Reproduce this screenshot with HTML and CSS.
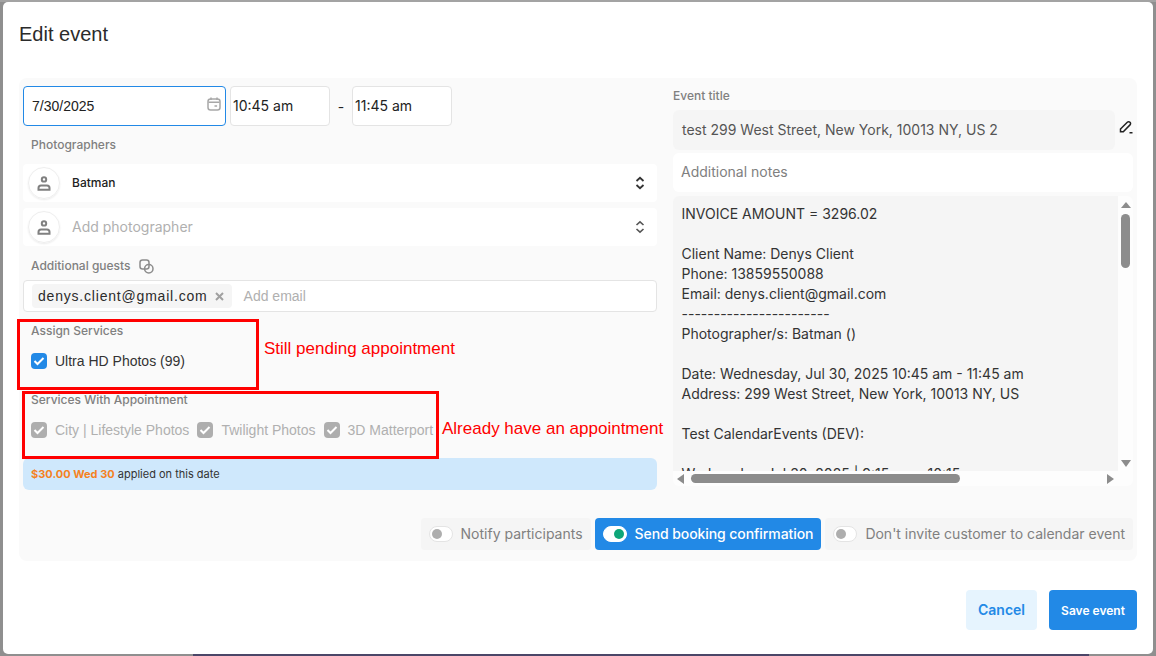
FILE: index.html
```html
<!DOCTYPE html>
<html lang="en">
<head>
    <meta charset="UTF-8">
    <title>Edit event</title>
    <link rel="stylesheet" href="styles.css">
</head>
<body>
    <div class="page-bar"></div>

    <div class="modal">
        <h1>Edit event</h1>

        <div class="panel">
            <div class="columns">
                <div class="left">
                    <div class="date-row">
                        <div class="field date-field">
                            <span>7/30/2025</span>
                            <svg class="cal-icon" width="14" height="14" viewBox="0 0 14 14" fill="none" stroke="#a8a8a8" stroke-width="1.5"><rect x="1" y="2" width="12" height="11" rx="2.5"/><path d="M4 .6v2.4M10 .6v2.4M1.500 5.200h11M7.500 9h2.600"/></svg>
                        </div>
                        <div class="field time-field">10:45 am</div>
                        <span class="dash">-</span>
                        <div class="field time-field">11:45 am</div>
                    </div>

                    <div class="label label-photographers">Photographers</div>
                    <div class="select-row">
                        <span class="avatar">
                            <svg width="14" height="15" viewBox="0 0 14 15" fill="none" stroke="#808080" stroke-width="2"><circle cx="7" cy="3.400" r="2.200"/><path d="M1.500 13.800v-1.800c0-1.500 1-2.500 2.500-2.500h6c1.500 0 2.500 1 2.500 2.500v1.800z"/></svg>
                        </span>
                        <span class="select-name">Batman</span>
                        <svg class="chevrons" width="10" height="14" viewBox="0 0 10 14" fill="none" stroke="#333" stroke-width="1.800"><path d="M1.500 5 5 1.800 8.500 5M1.500 9 5 12.200 8.500 9"/></svg>
                    </div>
                    <div class="select-row">
                        <span class="avatar">
                            <svg width="14" height="15" viewBox="0 0 14 15" fill="none" stroke="#808080" stroke-width="2"><circle cx="7" cy="3.400" r="2.200"/><path d="M1.500 13.800v-1.800c0-1.500 1-2.500 2.500-2.500h6c1.500 0 2.500 1 2.500 2.500v1.800z"/></svg>
                        </span>
                        <span class="select-placeholder">Add photographer</span>
                        <svg class="chevrons" width="10" height="14" viewBox="0 0 10 14" fill="none" stroke="#555" stroke-width="1.600"><path d="M1.500 5 5 1.800 8.500 5M1.500 9 5 12.200 8.500 9"/></svg>
                    </div>

                    <div class="label label-guests">
                        Additional guests
                        <svg width="15" height="15" viewBox="0 0 15 15" fill="none" stroke="#8c8c8c" stroke-width="1.500"><rect x="1" y="1" width="9" height="9" rx="2.500"/><circle cx="9.800" cy="9.800" r="4.200"/></svg>
                    </div>
                    <div class="email-box">
                        <span class="chip">
                            denys.client@gmail.com
                            <svg class="chip-x" width="9" height="9" viewBox="0 0 9 9" fill="none" stroke="#a0a0a0" stroke-width="2"><path d="M1 1l7 7M8 1l-7 7"/></svg>
                        </span>
                        <span class="email-placeholder">Add email</span>
                    </div>

                    <div class="label label-assign">Assign Services</div>
                    <div class="check-row check-row-assign">
                        <label class="check">
                            <span class="box box-on"><svg width="12" height="10" viewBox="0 0 12 10" fill="none" stroke="#fff" stroke-width="2"><path d="M1.500 5 4.500 8 10.500 2"/></svg></span>
                            Ultra HD Photos (99)
                        </label>
                    </div>

                    <div class="label label-with">Services With Appointment</div>
                    <div class="check-row check-row-with">
                        <label class="check check-off">
                            <span class="box"><svg width="12" height="10" viewBox="0 0 12 10" fill="none" stroke="#fff" stroke-width="2"><path d="M1.500 5 4.500 8 10.500 2"/></svg></span>
                            City | Lifestyle Photos
                        </label>
                        <label class="check check-off">
                            <span class="box"><svg width="12" height="10" viewBox="0 0 12 10" fill="none" stroke="#fff" stroke-width="2"><path d="M1.500 5 4.500 8 10.500 2"/></svg></span>
                            Twilight Photos
                        </label>
                        <label class="check check-off">
                            <span class="box"><svg width="12" height="10" viewBox="0 0 12 10" fill="none" stroke="#fff" stroke-width="2"><path d="M1.500 5 4.500 8 10.500 2"/></svg></span>
                            3D Matterport
                        </label>
                    </div>

                    <div class="promo"><b>$30.00 Wed 30</b> applied on this date</div>
                </div>

                <div class="right">
                    <div class="label label-title">Event title</div>
                    <div class="title-row">
                        <div class="title-input">test 299 West Street, New York, 10013 NY, US 2</div>
                        <svg class="pencil" width="14" height="14" viewBox="0 0 14 14" fill="none" stroke="#222" stroke-width="1.500"><path d="M1.500 9 8.300 2.200a1.900 1.900 0 0 1 2.700 2.700L4.300 11.800H1.500zM10.500 12.800h3"/></svg>
                    </div>
                    <div class="notes-input">Additional notes</div>
                    <div class="notes-box">
                        <div class="notes-main">
                            <div class="notes-text">INVOICE AMOUNT = 3296.02

Client Name: Denys Client
Phone: 13859550088
Email: denys.client@gmail.com
-----------------------
Photographer/s: Batman ()

Date: Wednesday, Jul 30, 2025 10:45 am - 11:45 am
Address: 299 West Street, New York, 10013 NY, US

Test CalendarEvents (DEV):

Wednesday, Jul 30, 2025 | 9:15 am - 10:15 am</div>
                            <div class="scroll-v">
                                <span class="arrow arrow-up"></span>
                                <span class="thumb-v"></span>
                                <span class="arrow arrow-down"></span>
                            </div>
                        </div>
                        <div class="scroll-h">
                            <span class="arrow arrow-left"></span>
                            <span class="thumb-h"></span>
                            <span class="arrow arrow-right"></span>
                        </div>
                    </div>
                </div>
            </div>

            <div class="toggles">
                <div class="toggle-item">
                    <span class="switch"><span class="knob"></span></span>
                    <span class="toggle-text">Notify participants</span>
                </div>
                <div class="toggle-item toggle-on">
                    <span class="switch"><span class="knob"></span></span>
                    <span class="toggle-text">Send booking confirmation</span>
                </div>
                <div class="toggle-item">
                    <span class="switch"><span class="knob"></span></span>
                    <span class="toggle-text">Don't invite customer to calendar event</span>
                </div>
            </div>
        </div>

        <div class="actions">
            <button class="btn btn-cancel">Cancel</button>
            <button class="btn btn-save">Save event</button>
        </div>

        <!-- annotations drawn on top of the screenshot -->
        <div class="note-box note-box-1"></div>
        <div class="note-text note-text-1">Still pending appointment</div>
        <div class="note-box note-box-2"></div>
        <div class="note-text note-text-2">Already have an appointment</div>
    </div>
</body>
</html>
```

FILE: styles.css
```css
/* Page behind the dialog */
html, body {
    margin: 0;
    height: 100%;
    overflow: hidden;
}

body {
    position: relative;
    background: linear-gradient(#a3a3a3 2px, #8f8f8f 2px);
    font-family: 'Inter', sans-serif;
    color: #222;
    padding: 2px 3px;
    box-sizing: border-box;
}

.page-bar {
    position: absolute;
    left: 193px;
    bottom: 0;
    width: 896px;
    height: 2px;
    background-color: #4b4668;
}

/* Dialog */
.modal {
    position: relative;
    background-color: #fff;
    width: 1150px;
    height: 652px;
    border-radius: 5px;
    padding: 0 16px;
    box-sizing: border-box;
}

h1 {
    margin: 0;
    padding-top: 19px;
    height: 76px;
    box-sizing: border-box;
    font-family: 'Liberation Sans', sans-serif;
    font-size: 20px;
    line-height: 26px;
    font-weight: 400;
    color: #2b2b2b;
}

/* Grey panel */
.panel {
    background-color: #fafafa;
    border-radius: 8px;
    height: 483px;
    padding: 8px 4px 11px;
    box-sizing: border-box;
    display: flex;
    flex-direction: column;
    justify-content: space-between;
}

.columns {
    display: flex;
    gap: 16px;
}

.left {
    width: 634px;
}

.right {
    width: 460px;
}

.label {
    font-size: 12px;
    line-height: 16px;
    font-weight: 500;
    color: #808080;
    padding-left: 8px;
}

/* Date and time */
.date-row {
    display: flex;
    align-items: center;
}

.field {
    height: 40px;
    background-color: #fff;
    border: 1px solid #e4e4e4;
    border-radius: 4px;
    box-sizing: border-box;
    font-size: 14px;
    display: flex;
    align-items: center;
}

.date-field {
    width: 203px;
    margin-right: 4px;
    border-color: #2289e6;
    padding: 0 4px 0 8px;
    justify-content: space-between;
    font-family: 'Liberation Sans', sans-serif;
}

.cal-icon {
    margin-bottom: 4px;
}

.time-field {
    width: 100px;
    padding: 0 0 2px 2px;
}

.dash {
    width: 22px;
    text-align: center;
    font-size: 14px;
}

.label-photographers {
    margin: 11px 0 11px;
}

/* Photographer selects */
.select-row {
    height: 38px;
    background-color: #fff;
    border-radius: 4px;
    margin-bottom: 6px;
    padding: 0 12px 0 5px;
    display: flex;
    align-items: center;
}

.avatar {
    width: 32px;
    height: 32px;
    border-radius: 50%;
    border: 1px solid #eee;
    box-shadow: 0 1px 2px rgba(0, 0, 0, 0.08);
    box-sizing: border-box;
    display: flex;
    align-items: center;
    justify-content: center;
    margin-right: 12px;
}

.select-name {
    font-size: 12px;
    font-weight: 500;
    flex: 1;
    padding-bottom: 2px;
}

.select-placeholder {
    font-size: 14px;
    color: #b0b0b0;
    flex: 1;
    padding-bottom: 2px;
}

.label-guests {
    margin-top: 12px;
    display: flex;
    align-items: center;
    gap: 8px;
}

/* Guests */
.email-box {
    margin-top: 6px;
    height: 32px;
    background-color: #fff;
    border: 1px solid #e4e4e4;
    border-radius: 4px;
    box-sizing: border-box;
    padding: 0 8px;
    display: flex;
    align-items: center;
    font-family: 'Liberation Sans', sans-serif;
    font-size: 14px;
}

.chip {
    background-color: #f5f5f5;
    border-radius: 4px;
    height: 24px;
    padding: 0 8px 0 6px;
    letter-spacing: 0.8px;
    margin-right: 12px;
    color: #2b2b2b;
    display: flex;
    align-items: center;
    gap: 7px;
    white-space: nowrap;
}

.email-placeholder {
    color: #b0b0b0;
}

.label-assign {
    margin-top: 11px;
}

/* Checkboxes */
.check-row {
    display: flex;
    padding-left: 8px;
    gap: 8px;
}

.check-row-assign {
    margin-top: 13px;
}

.label-with {
    margin-top: 22px;
}

.check-row-with {
    margin-top: 13px;
}

.check {
    display: flex;
    align-items: center;
    gap: 8px;
    font-family: 'Liberation Sans', sans-serif;
    font-size: 14px;
    line-height: 18px;
    color: #333;
}

.check-off {
    color: #b0b0b0;
}

.box {
    width: 16px;
    height: 16px;
    border-radius: 4px;
    background-color: #aeaeae;
    display: flex;
    align-items: center;
    justify-content: center;
}

.box-on {
    background-color: #2289e6;
}

/* Discount strip */
.promo {
    margin-top: 19px;
    height: 32px;
    background-color: #cfe8fc;
    border-radius: 6px;
    padding-left: 8px;
    font-size: 11px;
    line-height: 32px;
    color: #333;
}

.promo b {
    color: #f5821f;
    font-weight: 700;
}

/* Right column */
.label-title {
    margin-top: 2px;
    padding-left: 0;
}

.title-row {
    margin-top: 6px;
    display: flex;
    align-items: center;
}

.title-input {
    width: 442px;
    height: 40px;
    background-color: #f5f5f5;
    border-radius: 6px;
    padding-left: 9px;
    box-sizing: border-box;
    font-size: 14px;
    line-height: 40px;
    color: #555;
}

.pencil {
    margin-left: 4px;
    margin-top: -6px;
}

.notes-input {
    margin-top: 3px;
    height: 39px;
    background-color: #fff;
    border-radius: 6px;
    padding-left: 8px;
    font-size: 14px;
    line-height: 37px;
    color: #808080;
}

.notes-box {
    margin-top: 4px;
    background-color: #fdfdfd;
    border-radius: 6px;
    overflow: hidden;
}

.notes-main {
    display: flex;
    height: 275px;
}

.notes-text {
    width: 445px;
    background-color: #f5f5f5;
    padding: 8px 8.5px 0;
    box-sizing: border-box;
    font-size: 14px;
    line-height: 20px;
    color: #333;
    white-space: pre;
    overflow: hidden;
}

/* Scrollbars */
.scroll-v {
    width: 15px;
    display: flex;
    flex-direction: column;
    align-items: center;
    padding-top: 6px;
}

.thumb-v {
    width: 9px;
    height: 54px;
    margin-top: 6px;
    border-radius: 5px;
    background-color: #8c8c8c;
}

.arrow-down {
    margin-top: auto;
    margin-bottom: 4px;
}

.scroll-h {
    height: 15px;
    display: flex;
    align-items: center;
    padding-left: 4px;
    width: 445px;
    box-sizing: border-box;
}

.thumb-h {
    width: 269px;
    height: 9px;
    margin-left: 7px;
    border-radius: 5px;
    background-color: #8c8c8c;
}

.arrow {
    width: 0;
    height: 0;
    border-style: solid;
    border-color: transparent;
}

.arrow-up {
    border-width: 0 5px 6px;
    border-bottom-color: #8c8c8c;
}

.arrow-down {
    border-width: 7px 5px 0;
    border-top-color: #8c8c8c;
}

.arrow-left {
    border-width: 5px 7px 5px 0;
    border-right-color: #8c8c8c;
}

.arrow-right {
    border-width: 5px 0 5px 7px;
    border-left-color: #8c8c8c;
    margin-left: auto;
    margin-right: 4px;
}

/* Toggles */
.toggles {
    display: flex;
    justify-content: flex-end;
    gap: 4px;
}

.toggle-item {
    height: 32px;
    background-color: #f5f5f5;
    border-radius: 4px;
    padding: 0 8px;
    display: flex;
    align-items: center;
    gap: 8px;
    font-size: 14px;
    color: #808080;
}

.toggle-text {
    padding-bottom: 2px;
}

.toggle-on {
    background-color: #2289e6;
    color: #fff;
    font-weight: 500;
    letter-spacing: -0.08px;
}

.switch {
    width: 24px;
    height: 16px;
    background-color: #fff;
    border: 1px solid #e4e4e4;
    border-radius: 8px;
    box-sizing: border-box;
    display: flex;
    align-items: center;
    padding-left: 2px;
}

.knob {
    width: 10px;
    height: 10px;
    border-radius: 50%;
    background-color: #aeaeae;
}

.toggle-on .switch {
    justify-content: flex-end;
    padding: 0 2px 0 0;
    border-color: #fff;
}

.toggle-on .knob {
    background-color: #0ea678;
}

/* Footer buttons */
.actions {
    display: flex;
    justify-content: flex-end;
    gap: 12px;
    margin-top: 29px;
}

.btn {
    height: 40px;
    border: none;
    border-radius: 4px;
    font-family: inherit;
    font-weight: 600;
}

.btn-cancel {
    width: 71px;
    background-color: #e6f4fe;
    color: #2289e6;
    font-size: 14px;
    padding-bottom: 3px;
}

.btn-save {
    width: 88px;
    background-color: #2289e6;
    color: #fff;
    font-size: 12px;
}

/* Red annotations laid over the dialog */
.note-box {
    position: absolute;
    border: 3px solid #f00;
    box-sizing: border-box;
}

.note-box-1 {
    left: 14px;
    top: 317px;
    width: 242px;
    height: 71px;
}

.note-box-2 {
    left: 19px;
    top: 389px;
    width: 417px;
    height: 68px;
}

.note-text {
    position: absolute;
    font-family: 'Liberation Sans', sans-serif;
    font-size: 17px;
    line-height: 20px;
    color: #f00;
    white-space: nowrap;
}

.note-text-1 {
    left: 261px;
    top: 337px;
}

.note-text-2 {
    left: 439px;
    top: 417px;
}
```
